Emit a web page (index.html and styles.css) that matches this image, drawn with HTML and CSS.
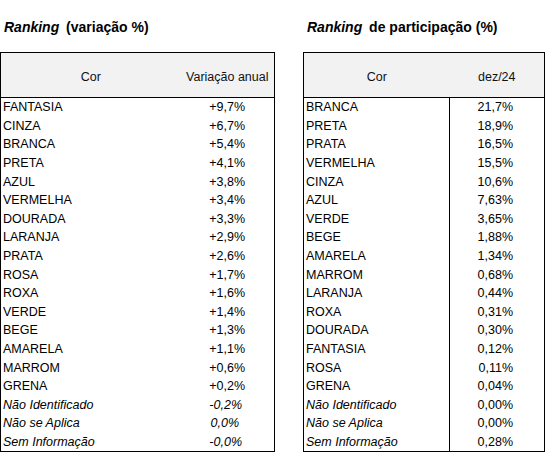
FILE: index.html
```
<!DOCTYPE html>
<html lang="pt-BR">
<head>
    <meta charset="UTF-8">
    <title>Ranking de cores</title>
    <link rel="stylesheet" href="styles.css">
</head>
<body>
    <div class="cont">
        <div class="bloco esq">
            <h2 class="titulo"><i>Ranking</i> (variação %)</h2>
            <table class="tab">
                <colgroup><col class="c1"><col></colgroup>
                <thead>
                    <tr><th>Cor</th><th>Variação anual</th></tr>
                </thead>
                <tbody>
                    <tr><td>FANTASIA</td><td class="val">+9,7%</td></tr>
                    <tr><td>CINZA</td><td class="val">+6,7%</td></tr>
                    <tr><td>BRANCA</td><td class="val">+5,4%</td></tr>
                    <tr><td>PRETA</td><td class="val">+4,1%</td></tr>
                    <tr><td>AZUL</td><td class="val">+3,8%</td></tr>
                    <tr><td>VERMELHA</td><td class="val">+3,4%</td></tr>
                    <tr><td>DOURADA</td><td class="val">+3,3%</td></tr>
                    <tr><td>LARANJA</td><td class="val">+2,9%</td></tr>
                    <tr><td>PRATA</td><td class="val">+2,6%</td></tr>
                    <tr><td>ROSA</td><td class="val">+1,7%</td></tr>
                    <tr><td>ROXA</td><td class="val">+1,6%</td></tr>
                    <tr><td>VERDE</td><td class="val">+1,4%</td></tr>
                    <tr><td>BEGE</td><td class="val">+1,3%</td></tr>
                    <tr><td>AMARELA</td><td class="val">+1,1%</td></tr>
                    <tr><td>MARROM</td><td class="val">+0,6%</td></tr>
                    <tr><td>GRENA</td><td class="val">+0,2%</td></tr>
                    <tr class="it"><td>Não Identificado</td><td class="val">-0,2%</td></tr>
                    <tr class="it"><td>Não se Aplica</td><td class="val zero">0,0%</td></tr>
                    <tr class="it"><td>Sem Informação</td><td class="val">-0,0%</td></tr>
                </tbody>
            </table>
        </div>
        <div class="bloco dir">
            <h2 class="titulo"><i>Ranking</i> de participação (%)</h2>
            <table class="tab div">
                <colgroup><col class="c1"><col></colgroup>
                <thead>
                    <tr><th>Cor</th><th>dez/24</th></tr>
                </thead>
                <tbody>
                    <tr><td>BRANCA</td><td class="val">21,7%</td></tr>
                    <tr><td>PRETA</td><td class="val">18,9%</td></tr>
                    <tr><td>PRATA</td><td class="val">16,5%</td></tr>
                    <tr><td>VERMELHA</td><td class="val">15,5%</td></tr>
                    <tr><td>CINZA</td><td class="val">10,6%</td></tr>
                    <tr><td>AZUL</td><td class="val">7,63%</td></tr>
                    <tr><td>VERDE</td><td class="val">3,65%</td></tr>
                    <tr><td>BEGE</td><td class="val">1,88%</td></tr>
                    <tr><td>AMARELA</td><td class="val">1,34%</td></tr>
                    <tr><td>MARROM</td><td class="val">0,68%</td></tr>
                    <tr><td>LARANJA</td><td class="val">0,44%</td></tr>
                    <tr><td>ROXA</td><td class="val">0,31%</td></tr>
                    <tr><td>DOURADA</td><td class="val">0,30%</td></tr>
                    <tr><td>FANTASIA</td><td class="val">0,12%</td></tr>
                    <tr><td>ROSA</td><td class="val">0,11%</td></tr>
                    <tr><td>GRENA</td><td class="val">0,04%</td></tr>
                    <tr class="it"><td>Não Identificado</td><td class="val">0,00%</td></tr>
                    <tr class="it"><td>Não se Aplica</td><td class="val">0,00%</td></tr>
                    <tr class="it"><td>Sem Informação</td><td class="val">0,28%</td></tr>
                </tbody>
            </table>
        </div>
    </div>
</body>
</html>
```

FILE: styles.css
```
body{
    margin: 0;
    background-color: white;
    font-family: 'Liberation Sans', Arial, sans-serif;
    color: black;
}

.cont{
    display: flex;
    gap: 28px;
    padding-top: 19px;
}

.esq{
    width: 275px;
}
.dir{
    width: 242px;
}

.titulo{
    margin: 0 0 17px 4px;
    font-size: 14px;
    line-height: 16px;
    font-weight: bold;
}
.titulo i{
    margin-right: 3px;
}

.tab{
    width: 100%;
    border-collapse: collapse;
    border: 1px solid black;
    font-size: 12.5px;
    table-layout: fixed;
}

.esq .c1{
    width: 180px;
}
.dir .c1{
    width: 146px;
}

.tab th{
    height: 40px;
    padding: 4px 0 0 0;
    background-color: #f2f2f2;
    font-weight: normal;
    text-align: center;
    border-bottom: 1px solid black;
    color: #111;
    white-space: nowrap;
}

.tab td{
    height: 18.6px;
    padding: 0 0 0 2px;
    line-height: 14px;
    white-space: nowrap;
}

.tab td.val{
    text-align: right;
    padding-right: 29px;
}
.dir .tab td.val{
    padding-right: 31px;
}

.div td + td{
    border-left: 1px solid black;
}

.it td{
    font-style: italic;
}
.esq .it td.val{
    padding-right: 32px;
}
.esq .it td.zero{
    padding-right: 35px;
}
.dir .it td.val{
    font-style: normal;
}
```
